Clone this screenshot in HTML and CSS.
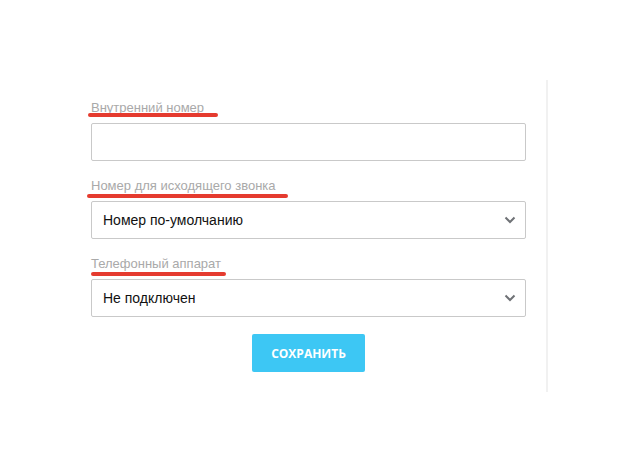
FILE: index.html
```html
<!DOCTYPE html>
<html lang="ru">
<head>
    <meta charset="UTF-8">
    <meta name="viewport" content="width=device-width, initial-scale=1.0">
    <title>Настройки телефонии</title>
    <link rel="stylesheet" href="styles.css">
</head>
<body>
    <div class="panel">
        <form class="form">
            <div class="field">
                <label class="label mark-1">Внутренний номер</label>
                <input class="input" type="text">
            </div>
            <div class="field">
                <label class="label mark-2">Номер для исходящего звонка</label>
                <div class="select">
                    <span>Номер по-умолчанию</span>
                    <svg width="12" height="8" viewBox="0 0 12 8"><path d="M1.5 1.5 6 6l4.5-4.5" fill="none" stroke="#6f7276" stroke-width="2"/></svg>
                </div>
            </div>
            <div class="field">
                <label class="label mark-3">Телефонный аппарат</label>
                <div class="select">
                    <span>Не подключен</span>
                    <svg width="12" height="8" viewBox="0 0 12 8"><path d="M1.5 1.5 6 6l4.5-4.5" fill="none" stroke="#6f7276" stroke-width="2"/></svg>
                </div>
            </div>
            <div class="actions">
                <button class="btn" type="button">Сохранить</button>
            </div>
        </form>
    </div>
</body>
</html>
```

FILE: styles.css
```css
body {
    margin: 0;
    background-color: #fff;
    font-family: "Liberation Sans", Arial, sans-serif;
}

/* панель с вертикальной линией справа */
.panel {
    margin-top: 80px;
    width: 546px;
    height: 312px;
    border-right: 2px solid #f1f1f1;
}

.form {
    width: 435px;
    margin-left: 91px;
    padding-top: 20px;
    display: flex;
    flex-direction: column;
    gap: 17px;
}

.field {
    display: flex;
    flex-direction: column;
    gap: 8px;
}

.label {
    position: relative;
    align-self: flex-start;
    font-size: 13px;
    line-height: 15px;
    color: #a9a9a9;
}

/* красные подчёркивания */
.label::after {
    content: "";
    position: absolute;
    height: 4px;
    border-radius: 2px;
    background-color: #e53b2f;
}

.mark-1::after {
    left: -3px;
    top: 13px;
    width: 130px;
}

.mark-2::after {
    left: -4px;
    top: 16px;
    width: 201px;
}

.mark-3::after {
    left: 0;
    top: 16px;
    width: 135px;
}

.input,
.select {
    box-sizing: border-box;
    width: 435px;
    height: 38px;
    border: 1px solid #c9c9c9;
    border-radius: 2px;
    background-color: #fff;
}

.input {
    margin: 0;
    padding: 0 10px;
    font: inherit;
}

.select {
    display: flex;
    align-items: center;
    justify-content: space-between;
    padding: 0 9px 0 11px;
    font-size: 14px;
    color: #111;
}

.actions {
    display: flex;
    justify-content: center;
}

.btn {
    width: 113px;
    height: 38px;
    border: none;
    border-radius: 2px;
    background-color: #3dc7f4;
    color: #fff;
    font-family: "Open Sans", sans-serif;
    font-weight: 700;
    font-size: 12px;
    text-transform: uppercase;
}
```
